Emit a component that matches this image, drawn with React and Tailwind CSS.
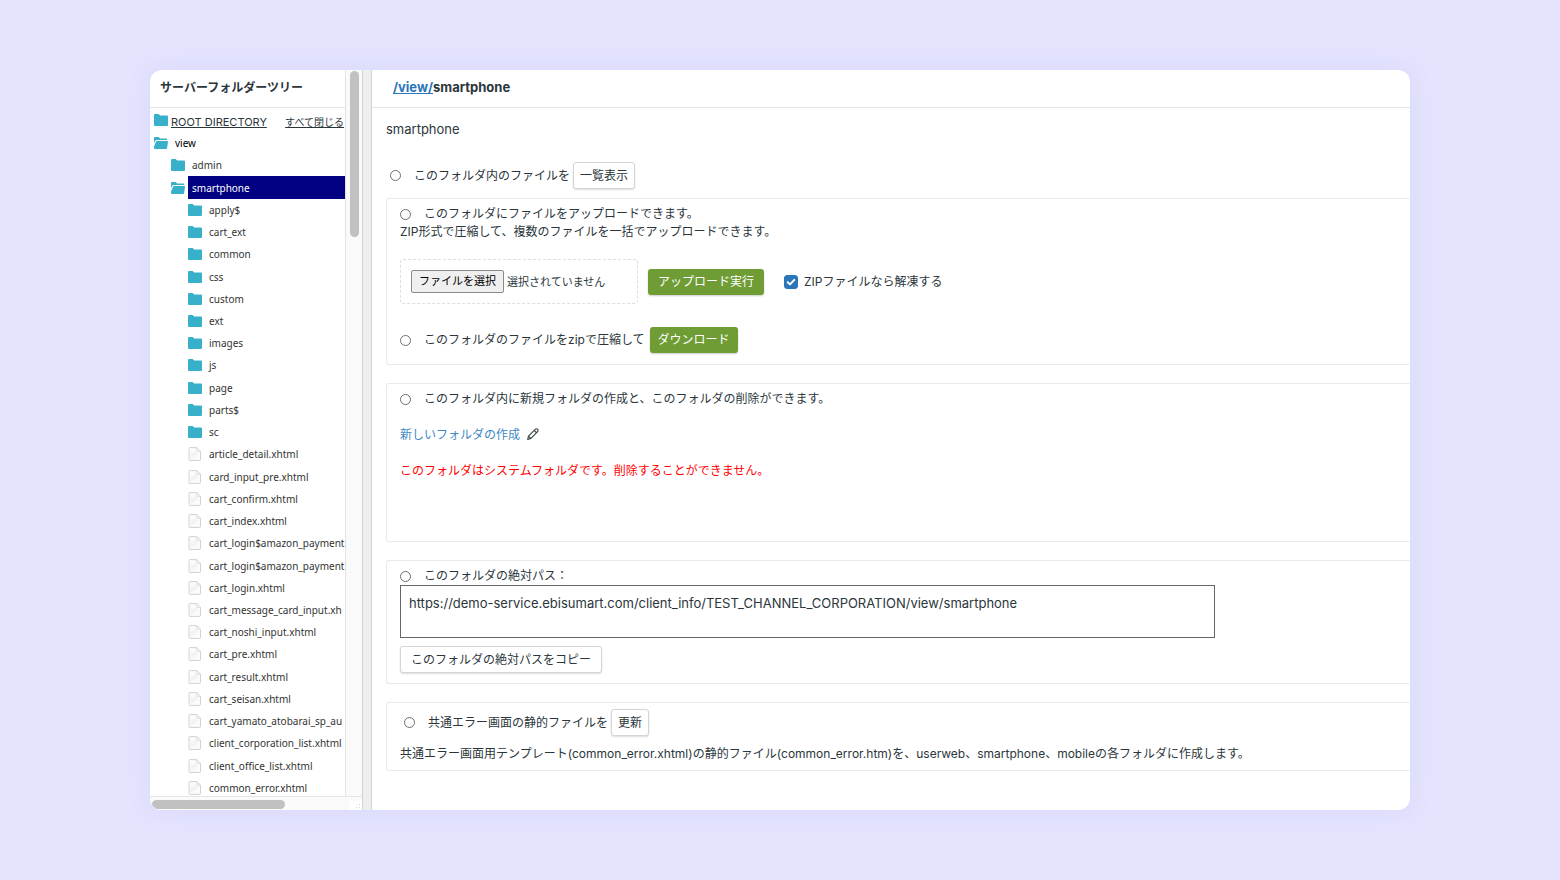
import React from "react";

const folders = ["apply$", "cart_ext", "common", "css", "custom", "ext", "images", "js", "page", "parts$", "sc"];
const files = [
  "article_detail.xhtml",
  "card_input_pre.xhtml",
  "cart_confirm.xhtml",
  "cart_index.xhtml",
  "cart_login$amazon_payment",
  "cart_login$amazon_payment",
  "cart_login.xhtml",
  "cart_message_card_input.xh",
  "cart_noshi_input.xhtml",
  "cart_pre.xhtml",
  "cart_result.xhtml",
  "cart_seisan.xhtml",
  "cart_yamato_atobarai_sp_au",
  "client_corporation_list.xhtml",
  "client_office_list.xhtml",
  "common_error.xhtml",
];

function Folder() {
  return (
    <svg viewBox="0 0 14 12" className="h-3 w-3.5 shrink-0" fill="#39b0c9" aria-hidden="true">
      <path d="M1 0h3.6l1.6 1.6H13a1 1 0 0 1 1 1V11a1 1 0 0 1-1 1H1a1 1 0 0 1-1-1V1a1 1 0 0 1 1-1z" />
    </svg>
  );
}

function FolderOpen() {
  return (
    <svg viewBox="0 0 14 12" className="h-3 w-3.5 shrink-0" fill="#39b0c9" aria-hidden="true">
      <path d="M1 0h3.6l1.6 1.4H12.4a.8.8 0 0 1 .8.8V3H2.4a1 1 0 0 0-.9.6L0 6V1a1 1 0 0 1 1-1z" />
      <path d="M3 4h10.2a.8.8 0 0 1 .8.9l-.9 6.2a1 1 0 0 1-1 .9H1a1 1 0 0 1-1-1V9.500l2-4.800A1 1 0 0 1 3 4z" />
    </svg>
  );
}

function FileIcon() {
  return (
    <svg viewBox="0 0 14 14" className="h-3.5 w-3.5 shrink-0" fill="none" aria-hidden="true">
      <path d="M1.800.6h7l3.700 3.500v8.500a.8.8 0 0 1-.8.8H1.800a.8.8 0 0 1-.8-.8V1.400a.8.8 0 0 1 .8-.8z" fill="#fbfbfb" stroke="#d2d2d2" strokeLinejoin="round" />
      <path d="M8.600 1v3.300h3.600" stroke="#dedede" />
      <path d="M2.500 12.300V6L7.500 4.500l3.500 2z" fill="#f3f3f3" />
    </svg>
  );
}

function Node({ icon, name, indent, selected }) {
  return (
    <li className={`flex min-h-0 items-center ${indent}`}>
      {icon}
      <a
        href="#"
        className={`ml-[3px] flex h-full flex-1 items-center pl-1 whitespace-nowrap ${selected ? "bg-[#000080] text-white" : ""}`}
      >
        {name}
      </a>
    </li>
  );
}

const radioClass =
  "size-[11px] shrink-0 appearance-none rounded-full border border-[#6b6f72] bg-white checked:border-4 checked:border-[#2a76b9]";
const plainButton =
  "h-[27px] rounded-[3px] border border-[#d3d6d8] bg-white shadow-[0_1px_2px_rgba(0,0,0,0.14)] whitespace-nowrap";
const greenButton = "h-[26px] rounded-[3px] bg-[#6f9c34] text-white shadow-[0_1px_2px_rgba(0,0,0,0.2)] whitespace-nowrap";
const panel = "rounded-l-[3px] border border-r-0 border-[#e9eaeb] pt-1.5 pl-[13px]";

function Choice({ id, children }) {
  return (
    <div className="flex items-center gap-[13px]">
      <input type="radio" name="action" id={id} className={radioClass} />
      <label htmlFor={id}>{children}</label>
    </div>
  );
}

export default function App() {
  return (
    <div className="flex h-screen min-h-[880px] bg-[#e4e4ff] px-[150px] py-[70px] font-['Inter','Noto_Sans_CJK_JP',sans-serif] text-xs leading-[18px] text-[#2b363b]">
      <div className="flex min-w-0 flex-1 overflow-hidden rounded-xl bg-white shadow-[0_0_24px_rgba(120,120,220,0.12)]">
        <aside className="flex w-[212px] shrink-0 flex-col">
          <div className="flex min-h-0 flex-1">
            <div className="flex w-[196px] shrink-0 flex-col overflow-hidden border-r border-[#e3e3e3]">
              <h2 className="h-[38px] shrink-0 border-b border-[#e6e6e6] pt-[9px] pl-2.5 font-bold">サーバーフォルダーツリー</h2>
              <div className="flex h-6 shrink-0 items-center pl-1 text-[11px]">
                <Folder />
                <a href="#" className="ml-[3px] pt-1 whitespace-nowrap underline">ROOT DIRECTORY</a>
                <a href="#" className="mr-px ml-auto pt-1 text-[10px] whitespace-nowrap underline">すべて閉じる</a>
              </div>
              <ul className="-mb-[3px] grid min-h-0 flex-1 auto-rows-fr font-['Noto_Sans',sans-serif] text-[10px] text-[#333333]">
                <Node icon={<FolderOpen />} name="view" indent="pl-1 text-black" />
                <Node icon={<Folder />} name="admin" indent="pl-[21px]" />
                <Node icon={<FolderOpen />} name="smartphone" indent="pl-[21px]" selected />
                {folders.map((name) => (
                  <Node key={name} icon={<Folder />} name={name} indent="pl-[38px]" />
                ))}
                {files.map((name, i) => (
                  <Node key={i} icon={<FileIcon />} name={name} indent="pl-[38px]" />
                ))}
              </ul>
            </div>
            <div className="flex-1 bg-[#fafafa] px-1 pt-px">
              <div className="h-[166px] w-[9px] rounded-full bg-[#c1c1c1]" />
            </div>
          </div>
          <div className="flex h-3.5 items-end justify-between border-t border-[#e6e6e6] bg-[#fafafa] pl-0.5">
            <div className="mb-px h-[9px] w-[133px] rounded-full bg-[#c1c1c1]" />
            <svg viewBox="0 0 13 9" className="h-[9px] w-[13px]" aria-hidden="true">
              <path d="M0 0h13v9H0z" fill="white" />
              <path d="M10 3h1v1h-1zM7 6h1v1H7zM10 6h1v1h-1z" fill="#d8d8d8" />
            </svg>
          </div>
        </aside>
        <div className="w-2.5 shrink-0 border-x border-[#d0d2d3] bg-[#eceeef]" />
        <main className="min-w-0 flex-1">
          <h1 className="h-[38px] border-b border-[#e6e6e6] pt-2 pl-[21px] text-[13px] font-bold">
            <a href="#" className="text-[#2a76b9] underline">/view/</a>smartphone
          </h1>
          <div className="pt-3 pl-3.5">
            <p className="text-[13px]">smartphone</p>
            <div className="mt-6 flex items-center gap-[3px] pl-1">
              <Choice id="list">このフォルダ内のファイルを</Choice>
              <button type="button" className={`${plainButton} px-1.5`}>一覧表示</button>
            </div>

            <section className={`${panel} mt-[9px] pb-[11px]`}>
              <Choice id="upload">このフォルダにファイルをアップロードできます。</Choice>
              <p>ZIP形式で圧縮して、複数のファイルを一括でアップロードできます。</p>
              <div className="mt-[18px] flex items-center">
                <div className="flex h-[45px] w-[238px] items-center rounded-[3px] border border-dashed border-[#dcdedf] pl-2.5">
                  <input type="file" id="file" className="sr-only" />
                  <label htmlFor="file" className="flex items-center gap-[3px] text-[11px]">
                    <span className="h-[23px] rounded-xs border border-[#8b8b8b] bg-[#efefef] px-[7px] leading-[21px] text-black">ファイルを選択</span>
                    選択されていません
                  </label>
                </div>
                <button type="button" className={`${greenButton} ml-2.5 px-2.5`}>アップロード実行</button>
                <span className="relative ml-5 flex size-3.5">
                  <input
                    type="checkbox"
                    id="unzip"
                    defaultChecked
                    className="peer size-3.5 appearance-none rounded-[3px] border border-[#2a76b9] bg-white checked:bg-[#2a76b9]"
                  />
                  <svg
                    viewBox="0 0 14 14"
                    className="pointer-events-none absolute inset-0 hidden peer-checked:block"
                    fill="none"
                    stroke="white"
                    strokeWidth="2"
                    strokeLinecap="round"
                    strokeLinejoin="round"
                    aria-hidden="true"
                  >
                    <path d="M3.7 7.2l2.3 2.2 4.3-4.5" />
                  </svg>
                </span>
                <label htmlFor="unzip" className="ml-1.5">ZIPファイルなら解凍する</label>
              </div>
              <div className="mt-[23px] flex items-center gap-[5px]">
                <Choice id="download">このフォルダのファイルをzipで圧縮して</Choice>
                <button type="button" className={`${greenButton} px-2`}>ダウンロード</button>
              </div>
            </section>

            <section className={`${panel} mt-[18px] pb-[61px]`}>
              <Choice id="create">このフォルダ内に新規フォルダの作成と、このフォルダの削除ができます。</Choice>
              <a href="#" className="mt-[18px] flex items-center gap-[7px] text-[#3d87c4]">
                新しいフォルダの作成
                <svg
                  viewBox="0 0 12 12"
                  className="mb-0.5 size-3"
                  fill="none"
                  stroke="#40484c"
                  strokeWidth="1.2"
                  strokeLinecap="round"
                  strokeLinejoin="round"
                  aria-hidden="true"
                >
                  <path d="M.7 11.3l.8-3.2L8.2 1.3a1.6 1.6 0 0 1 2.4 0 1.6 1.6 0 0 1 0 2.3l-6.7 6.8zM7.2 2.4l2.4 2.3M1.5 8.1l2.4 2.3" />
                </svg>
              </a>
              <p className="mt-[18px] text-[#ff0000]">このフォルダはシステムフォルダです。削除することができません。</p>
            </section>

            <section className={`${panel} mt-[18px] pr-4 pb-2.5`}>
              <Choice id="path">このフォルダの絶対パス：</Choice>
              <textarea
                aria-label="このフォルダの絶対パス"
                readOnly
                className="block h-[53px] w-[815px] max-w-full resize-none border border-[#666666] bg-white px-2 py-2 text-[13px]"
                defaultValue="https://demo-service.ebisumart.com/client_info/TEST_CHANNEL_CORPORATION/view/smartphone"
              />
              <button type="button" className={`${plainButton} mt-2 px-2.5`}>このフォルダの絶対パスをコピー</button>
            </section>

            <section className={`${panel} mt-[18px] pb-[7px]`}>
              <div className="flex items-center gap-[3px] pl-1">
                <Choice id="refresh">共通エラー画面の静的ファイルを</Choice>
                <button type="button" className={`${plainButton} px-1.5`}>更新</button>
              </div>
              <p className="mt-[9px]">
                共通エラー画面用テンプレート(common_error.xhtml)の静的ファイル(common_error.htm)を、userweb、smartphone、mobileの各フォルダに作成します。
              </p>
            </section>
          </div>
        </main>
      </div>
    </div>
  );
}
